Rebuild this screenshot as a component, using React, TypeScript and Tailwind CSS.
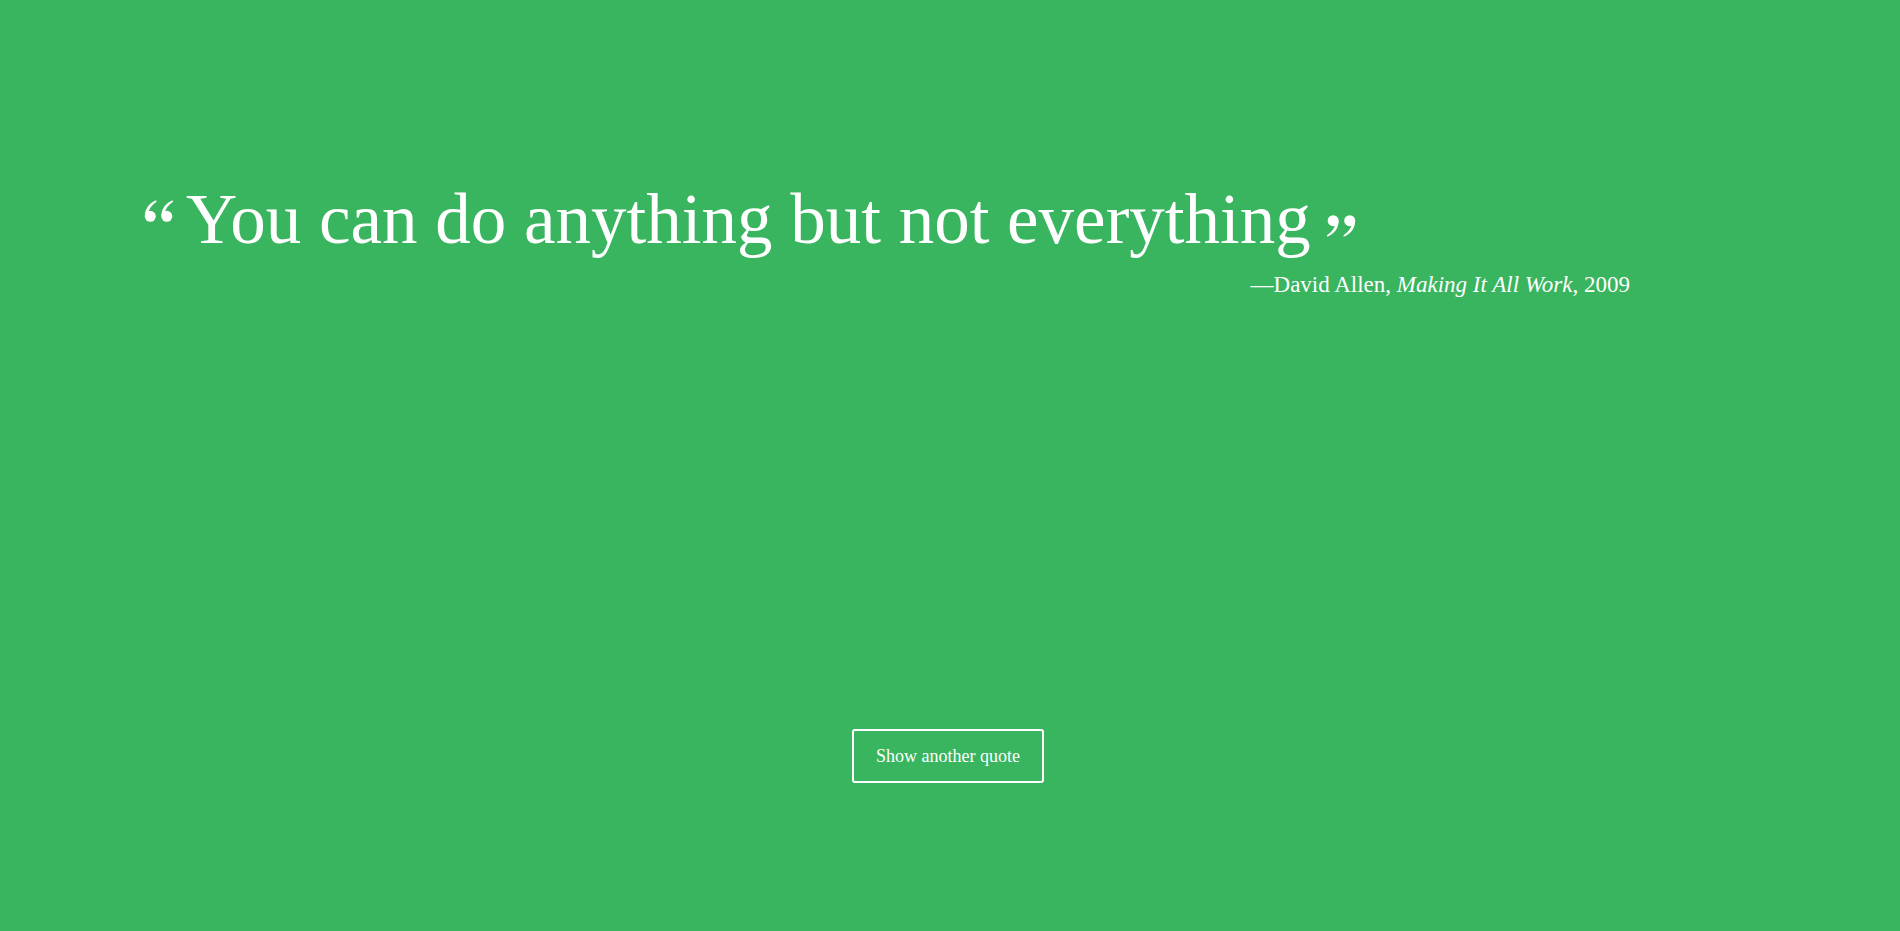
import React, { useState } from "react";

interface Quote {
  text: string;
  author: string;
  source: string;
  year: string;
}

const quotes: Quote[] = [
  {
    text: "You can do anything but not everything",
    author: "David Allen",
    source: "Making It All Work",
    year: "2009",
  },
];

const serif = "font-['Liberation_Serif','Times_New_Roman',serif]";

// heavy ball-terminal quote marks, drawn so they don't depend on the font
const QuoteMark: React.FC<{ closing?: boolean; className?: string }> = ({
  closing,
  className,
}) => {
  const mark = (
    <>
      <circle cx="6.3" cy="17.3" r="5.5" />
      <path d="M12.2 1.2C6.5 3.5 1 8.5 0.8 17L3.5 16C4.5 10.5 7.5 6 12.5 2.8Z" />
    </>
  );
  return (
    <svg
      viewBox="0 0 29 23"
      width="29"
      height="23"
      fill="currentColor"
      className={className}
    >
      <g transform={closing ? "rotate(180 14.5 11.5)" : undefined}>
        {mark}
        <g transform="translate(16.5 0)">{mark}</g>
      </g>
    </svg>
  );
};

const App: React.FC = () => {
  const [index, setIndex] = useState(0);
  const quote = quotes[index];

  return (
    <div
      className={`min-h-screen w-full bg-[#38b55e] text-white ${serif} flex flex-col`}
    >
      <div className="pt-[184px] pl-[144px] pr-[270px]">
        <blockquote className="flex items-start">
          <QuoteMark className="shrink-0 mt-[15px] mr-[13px]" />
          <span className="block text-[71px] leading-none">{quote.text}</span>
          <QuoteMark closing className="shrink-0 mt-[31px] ml-[16px]" />
        </blockquote>
        <p className="text-right text-[23px] leading-none mt-[18px]">
          &mdash;{quote.author}, <em>{quote.source}</em>, {quote.year}
        </p>
      </div>

      <div className="flex justify-center pt-[433px]">
        <button
          className="border-2 border-white rounded-[3px] px-[22px] h-[54px] mr-[4px] text-[18px] text-white"
          onClick={() => setIndex((index + 1) % quotes.length)}
        >
          Show another quote
        </button>
      </div>
    </div>
  );
};

export default App;
